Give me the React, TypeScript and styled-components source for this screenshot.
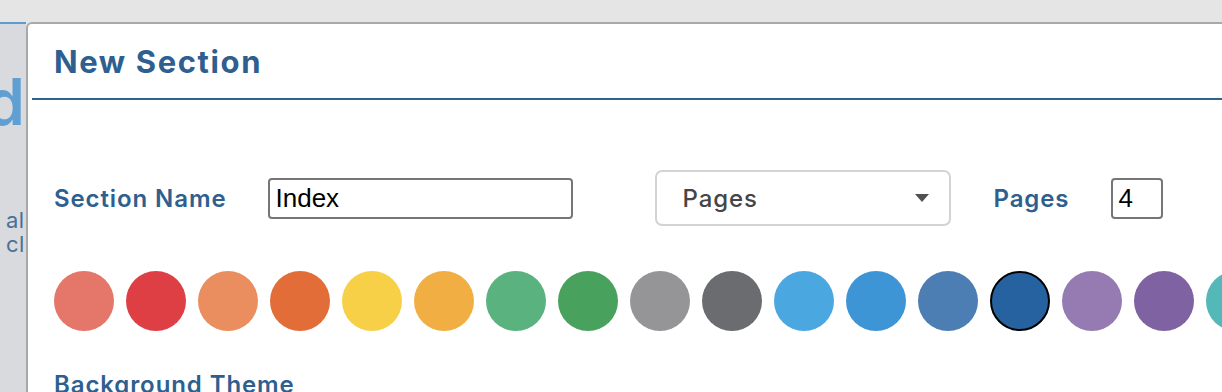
import React from 'react';
import styled, { createGlobalStyle } from 'styled-components';

const GlobalStyle = createGlobalStyle`
    html, body {
        margin: 0;
        padding: 0;
        background: #e5e5e5;
        overflow: hidden;
    }
    * {
        box-sizing: border-box;
    }
`

const Page = styled.div`
    display: flex;
    flex-direction: column;
    width: 1222px;
    height: 392px;
    font-family: 'Inter', 'Noto Sans', sans-serif;
`
const TopBar = styled.div`
    height: 22px;
    flex-shrink: 0;
    background: #e5e5e5;
`
const Stage = styled.div`
    display: flex;
    flex: 1;
    min-height: 0;
`
const SideStrip = styled.div`
    width: 26px;
    flex-shrink: 0;
    display: flex;
    flex-direction: column;
    align-items: flex-end;
    background: #d9dade;
    border-top: 2px solid #5d9bd1;
    overflow: hidden;
    padding-right: 1px;
`
const SideHeading = styled.div`
    margin-top: 42px;
    font-size: 64px;
    font-weight: 600;
    line-height: 72px;
    color: #5f9fd3;
    white-space: nowrap;
`
const SideText = styled.div`
    align-self: stretch;
    margin-top: 70px;
    padding-left: 6px;
    font-size: 22px;
    line-height: 24px;
    color: #4a7097;
    white-space: nowrap;
    overflow: hidden;
    letter-spacing: 0.5px;
`
const Modal = styled.div`
    flex: 1;
    min-width: 0;
    display: flex;
    flex-direction: column;
    background: #fff;
    border-top: 2px solid #a9a9a9;
    border-left: 2px solid #a9a9a9;
    border-top-left-radius: 6px;
    overflow: hidden;
`
const ModalHeader = styled.div`
    height: 76px;
    flex-shrink: 0;
    display: flex;
    align-items: center;
    margin-left: 4px;
    padding-left: 22px;
    border-bottom: 2px solid #2f6191;
`
const Title = styled.h2`
    margin: 0;
    font-size: 31px;
    font-weight: 700;
    color: #2e5f8f;
    letter-spacing: 1.6px;
`
const ModalBody = styled.div`
    padding: 70px 0 0 26px;
    display: flex;
    flex-direction: column;
`
const FieldRow = styled.div`
    display: flex;
    align-items: center;
    height: 56px;
    white-space: nowrap;
`
const Label = styled.label<{ $gap: number }>`
    font-size: 24px;
    font-weight: 600;
    color: #2e5f8f;
    letter-spacing: 0.9px;
    margin-right: ${p => p.$gap}px;
`
const TextInput = styled.input<{ $width: number }>`
    width: ${p => p.$width}px;
    height: 41px;
    padding: 0 5px;
    border: 2px solid #767676;
    border-radius: 4px;
    font-family: 'Liberation Sans', Arial, sans-serif;
    font-size: 26px;
    color: #000;
    outline: none;
`
const SelectBox = styled.div`
    width: 296px;
    height: 56px;
    margin-left: 82px;
    margin-right: 42px;
    display: flex;
    align-items: center;
    justify-content: space-between;
    padding: 0 20px 0 25px;
    border: 2px solid #d3d3d3;
    border-radius: 7px;
    font-size: 24px;
    font-weight: 500;
    letter-spacing: 0.9px;
    color: #454545;
`
const Caret = styled.span`
    width: 0;
    height: 0;
    border-left: 7px solid transparent;
    border-right: 7px solid transparent;
    border-top: 8px solid #505050;
`
const SwatchRow = styled.div`
    display: flex;
    gap: 12px;
    margin-top: 45px;
`
const Swatch = styled.button<{ $color: string; $active?: boolean }>`
    width: 60px;
    height: 60px;
    flex-shrink: 0;
    padding: 0;
    border-radius: 50%;
    background: ${p => p.$color};
    border: ${p => (p.$active ? '2px solid #000' : 'none')};
    cursor: pointer;
`
const SectionHeading = styled.div`
    margin-top: 39px;
    font-size: 24px;
    font-weight: 600;
    letter-spacing: 0.9px;
    color: #2e5f8f;
`

const colors = [
    '#e5766a', '#de3f45', '#ea8e5f', '#e26d38', '#f8d047', '#f1ae42',
    '#5ab37f', '#48a25d', '#959598', '#6b6c70', '#4aa7e0', '#3d95d6',
    '#4c7db3', '#2762a0', '#957bb2', '#7f62a1', '#55b8b8',
];

const App: React.FC = () => {
    return (
        <>
            <GlobalStyle />
            <Page>
                <TopBar />
                <Stage>
                    <SideStrip>
                        <SideHeading>Build</SideHeading>
                        <SideText>
                            also<br />click
                        </SideText>
                    </SideStrip>
                    <Modal>
                        <ModalHeader>
                            <Title>New Section</Title>
                        </ModalHeader>
                        <ModalBody>
                            <FieldRow>
                                <Label $gap={42}>Section Name</Label>
                                <TextInput $width={305} defaultValue="Index" />
                                <SelectBox>
                                    Pages
                                    <Caret />
                                </SelectBox>
                                <Label $gap={42}>Pages</Label>
                                <TextInput $width={52} defaultValue="4" />
                            </FieldRow>
                            <SwatchRow>
                                {colors.map((c, i) => (
                                    <Swatch key={c} $color={c} $active={i === 13} />
                                ))}
                            </SwatchRow>
                            <SectionHeading>Background Theme</SectionHeading>
                        </ModalBody>
                    </Modal>
                </Stage>
            </Page>
        </>
    );
};

export default App;
